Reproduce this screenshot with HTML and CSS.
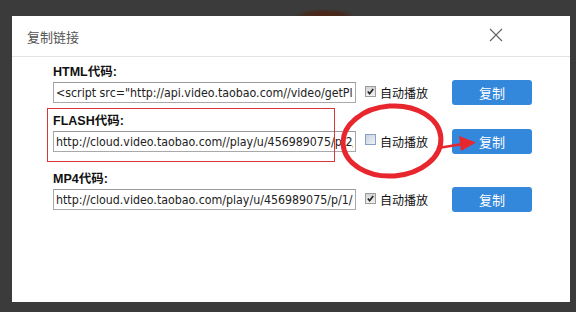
FILE: index.html
```html
<!DOCTYPE html>
<html>
	<head>
		<meta charset="utf-8">
		<title>复制链接</title>
		<link rel="stylesheet" href="styles.css">
	</head>
<body>

<div class="dialog">
	<div class="dialog-head">
		<span class="dialog-title">复制链接</span>
		<svg class="close" width="14" height="14" viewBox="0 0 14 14"><path d="M1 1L13 13M13 1L1 13" stroke="#666" stroke-width="1.2" fill="none"/></svg>
	</div>
	<div class="dialog-body">
		<div class="row">
			<div class="label">HTML代码:</div>
			<div class="controls">
				<input class="code" type="text" value='&lt;script src="http://api.video.taobao.com//video/getPlayerJS?vid=456989075' readonly />
				<span class="check on"><svg width="11" height="11" viewBox="0 0 11 11"><path d="M2.2 5.6L4.4 8.2L8.8 2.4" stroke="#222" stroke-width="2" fill="none"/></svg></span>
				<span class="auto">自动播放</span>
				<span class="btn">复制</span>
			</div>
		</div>
		<div class="row row2">
			<div class="label">FLASH代码:</div>
			<div class="controls">
				<input class="code" type="text" value="http://cloud.video.taobao.com//play/u/456989075/p/2/e/1/t/1/fv/102/" readonly />
				<span class="check off"></span>
				<span class="auto">自动播放</span>
				<span class="btn">复制</span>
			</div>
		</div>
		<div class="row row3">
			<div class="label">MP4代码:</div>
			<div class="controls">
				<input class="code" type="text" value="http://cloud.video.taobao.com/play/u/456989075/p/1/e/6/t/1/fv/102/" readonly />
				<span class="check on"><svg width="11" height="11" viewBox="0 0 11 11"><path d="M2.2 5.6L4.4 8.2L8.8 2.4" stroke="#222" stroke-width="2" fill="none"/></svg></span>
				<span class="auto">自动播放</span>
				<span class="btn">复制</span>
			</div>
		</div>
	</div>
</div>

<!-- 标注 -->
<div class="mark-box"></div>
<svg class="mark" width="576" height="312" viewBox="0 0 576 312">
	<ellipse cx="392" cy="141" rx="49" ry="35" stroke="#e8262d" stroke-width="5" fill="none" transform="rotate(-4 392 141)"/>
	<path d="M438 148L463 144" stroke="#e8262d" stroke-width="2.5" fill="none"/>
	<polygon points="459,136 476,142.5 461,151" fill="#e8262d"/>
</svg>

</body>
</html>
```

FILE: styles.css
```css
html, body {
	margin:0px;
	padding:0px;
}
body {
	width:576px;
	height:312px;
	overflow:hidden;
	background-color:#3b3b3b;
	background-image:radial-gradient(ellipse 30px 6px at 325px 15px, #4e2616 0%, #452a1e 60%, rgba(59,59,59,0) 100%);
	font-family:"Liberation Sans", "Noto Sans CJK SC", sans-serif;
	padding-top:16px;
	padding-left:12px;
	box-sizing:border-box;
}

.dialog {
	width:558px;
	height:286px;
	background-color:white;
}
.dialog-head {
	display:flex;
	align-items:center;
	justify-content:space-between;
	height:40px;
	padding:0px 67px 0px 15px;
	border-bottom:1px solid #e3e3e3;
}
.dialog-title {
	font-family:"Noto Sans CJK SC", sans-serif;
	font-size:13px;
	color:#555;
	margin-top:1px;
}
.close {
	display:block;
	margin-top:-2px;
}

.dialog-body {
	padding:7px 0px 0px 41px;
}
.row2 {
	margin-top:8px;
}
.row3 {
	margin-top:17px;
}
.label {
	height:16px;
	line-height:16px;
	font-size:12.5px;
	font-weight:bold;
	color:#111;
	font-family:"Liberation Sans", "Noto Sans CJK SC", sans-serif;
}
.controls {
	display:flex;
	align-items:center;
	height:25px;
}
.code {
	box-sizing:border-box;
	width:303px;
	height:21px;
	margin:0px;
	padding:0px 2px;
	border:1px solid #a9a9a9;
	border-top-color:#9a9a9a;
	font-family:"DejaVu Sans Condensed", "DejaVu Sans", sans-serif;
	font-size:12.3px;
	color:#222;
	outline:none;
}
.check {
	box-sizing:border-box;
	width:11px;
	height:11px;
	margin-left:9px;
	margin-top:-3px;
	display:flex;
	align-items:center;
	justify-content:center;
}
.check svg {
	display:block;
}
.check.on {
	border:1px solid #9c9c9c;
	background:linear-gradient(#d4d4d4, #f2f2f2);
}
.check.off {
	border:1px solid #8aa0c4;
	background:linear-gradient(135deg, #c9d2e0, #eef1f6);
	margin-top:-4px;
}
.auto {
	margin-left:4px;
	font-family:"Noto Sans CJK SC", sans-serif;
	font-size:12px;
	color:#111;
}
.btn {
	display:flex;
	align-items:center;
	justify-content:center;
	width:80px;
	height:25px;
	margin-left:24px;
	border-radius:3px;
	background-color:#3488dc;
	color:white;
	font-family:"Noto Sans CJK SC", sans-serif;
	font-size:13px;
}

/* 标注层 */
.mark-box {
	position:absolute;
	left:47px;
	top:108px;
	width:286px;
	height:52px;
	border:1px solid #d8363c;
}
.mark {
	position:absolute;
	left:0px;
	top:0px;
}
```
